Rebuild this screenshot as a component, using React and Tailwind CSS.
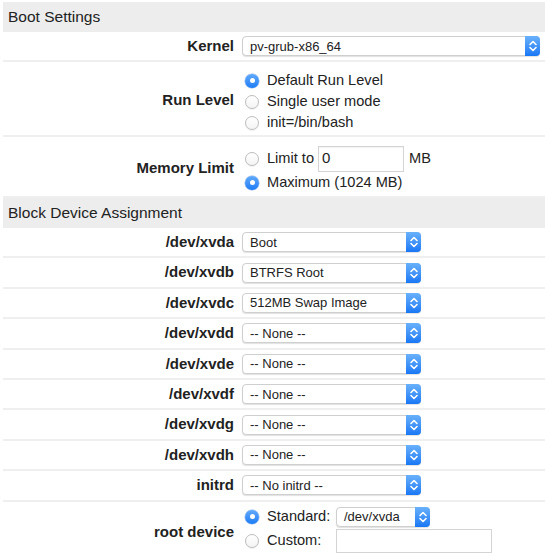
import React from "react";

function Chevrons() {
  return (
    <svg width="14" height="20" viewBox="0 0 14 20" className="block">
      <path d="M4 8.5 L7 5.5 L10 8.5" fill="none" stroke="white" strokeWidth="1.6" strokeLinecap="round" strokeLinejoin="round" />
      <path d="M4 11.5 L7 14.5 L10 11.5" fill="none" stroke="white" strokeWidth="1.6" strokeLinecap="round" strokeLinejoin="round" />
    </svg>
  );
}

function Select({ value, width }) {
  return (
    <div
      className="flex h-[20px] items-stretch rounded-[4px] border border-[#cfcfcf] bg-white shadow-[0_1px_1px_rgba(0,0,0,0.12)]"
      style={{ width }}
    >
      <div className="flex flex-1 items-center pl-[7px] text-[13px] text-[#222] leading-none">{value}</div>
      <div className="-my-px -mr-px flex w-[15px] items-center justify-center rounded-r-[4px] bg-gradient-to-b from-[#69b1fb] to-[#1677f5]">
        <Chevrons />
      </div>
    </div>
  );
}

function Radio({ checked }) {
  return checked ? (
    <div className="flex h-[14px] w-[14px] shrink-0 items-center justify-center rounded-full bg-gradient-to-b from-[#5fa9fb] to-[#1a7cf5] shadow-[0_0_0_0.5px_rgba(20,100,220,0.5)]">
      <div className="h-[5px] w-[5px] rounded-full bg-white" />
    </div>
  ) : (
    <div className="h-[14px] w-[14px] shrink-0 rounded-full border border-[#bdbdbd] bg-gradient-to-b from-white to-[#f4f4f4] shadow-[0_1px_0.5px_rgba(0,0,0,0.06)]" />
  );
}

function Option({ checked, children, className = "" }) {
  return (
    <div className={"flex items-center gap-[8px] pl-[3px] " + className}>
      <Radio checked={checked} />
      <div className="flex items-center text-[14.6px] text-[#222]">{children}</div>
    </div>
  );
}

function Header({ children }) {
  return (
    <div className="flex h-[30px] items-center bg-[#ededed] pl-[5px] text-[15.5px] text-[#222]">{children}</div>
  );
}

function Row({ label, children, className = "", ctrlClass = "" }) {
  return (
    <div className={"flex items-center border-b-2 border-[#efefef] " + className}>
      <div className="w-[231px] shrink-0 text-right text-[15px] font-bold text-[#222]">{label}</div>
      <div className={"pl-[8px] " + ctrlClass}>{children}</div>
    </div>
  );
}

const devices = [
  ["/dev/xvda", "Boot"],
  ["/dev/xvdb", "BTRFS Root"],
  ["/dev/xvdc", "512MB Swap Image"],
  ["/dev/xvdd", "-- None --"],
  ["/dev/xvde", "-- None --"],
  ["/dev/xvdf", "-- None --"],
  ["/dev/xvdg", "-- None --"],
  ["/dev/xvdh", "-- None --"],
  ["initrd", "-- No initrd --"],
];

export default function App() {
  return (
    <div
      className="h-[557px] w-[545px] overflow-hidden bg-white pl-[3px] pt-[2px]"
      style={{ fontFamily: '"Liberation Sans", Arial, sans-serif' }}
    >
      <Header>Boot Settings</Header>
      <Row label="Kernel" className="h-[30px]">
        <Select value="pv-grub-x86_64" width={298} />
      </Row>
      <Row label="Run Level" className="h-[75px] pt-[3px]" ctrlClass="pt-[3px]">
        <div className="flex flex-col">
          <Option checked className="h-[21px]">Default Run Level</Option>
          <Option className="h-[21px]">Single user mode</Option>
          <Option className="h-[21px]">init=/bin/bash</Option>
        </div>
      </Row>
      <Row label="Memory Limit" className="h-[61px] pt-[4px]" ctrlClass="pt-[2px]">
        <div className="flex flex-col">
          <Option className="h-[26px]">
            <span>Limit to</span>
            <div className="ml-[4px] flex h-[26px] w-[86px] items-center border border-[#d4d4d4] bg-white pl-[3px] text-[15px] shadow-[inset_0_1px_1px_rgba(0,0,0,0.05)]">
              0
            </div>
            <span className="ml-[5px]">MB</span>
          </Option>
          <Option checked className="h-[22px]">Maximum (1024 MB)</Option>
        </div>
      </Row>
      <Header>Block Device Assignment</Header>
      {devices.map(([label, value]) => (
        <Row key={label} label={label} className="h-[30.4px]">
          <Select value={value} width={179} />
        </Row>
      ))}
      <div className="flex items-center pt-[5px]">
        <div className="w-[231px] shrink-0 pt-[5px] text-right text-[15px] font-bold text-[#222]">root device</div>
        <div className="flex flex-col gap-[2px] pl-[8px]">
          <div className="flex h-[20px] items-center">
            <Option checked className="w-[94px]">Standard:</Option>
            <Select value="/dev/xvda" width={94} />
          </div>
          <div className="flex h-[24px] items-center">
            <Option className="w-[94px]">Custom:</Option>
            <div className="h-[24px] w-[156px] border border-[#d4d4d4] bg-white" />
          </div>
        </div>
      </div>
    </div>
  );
}
